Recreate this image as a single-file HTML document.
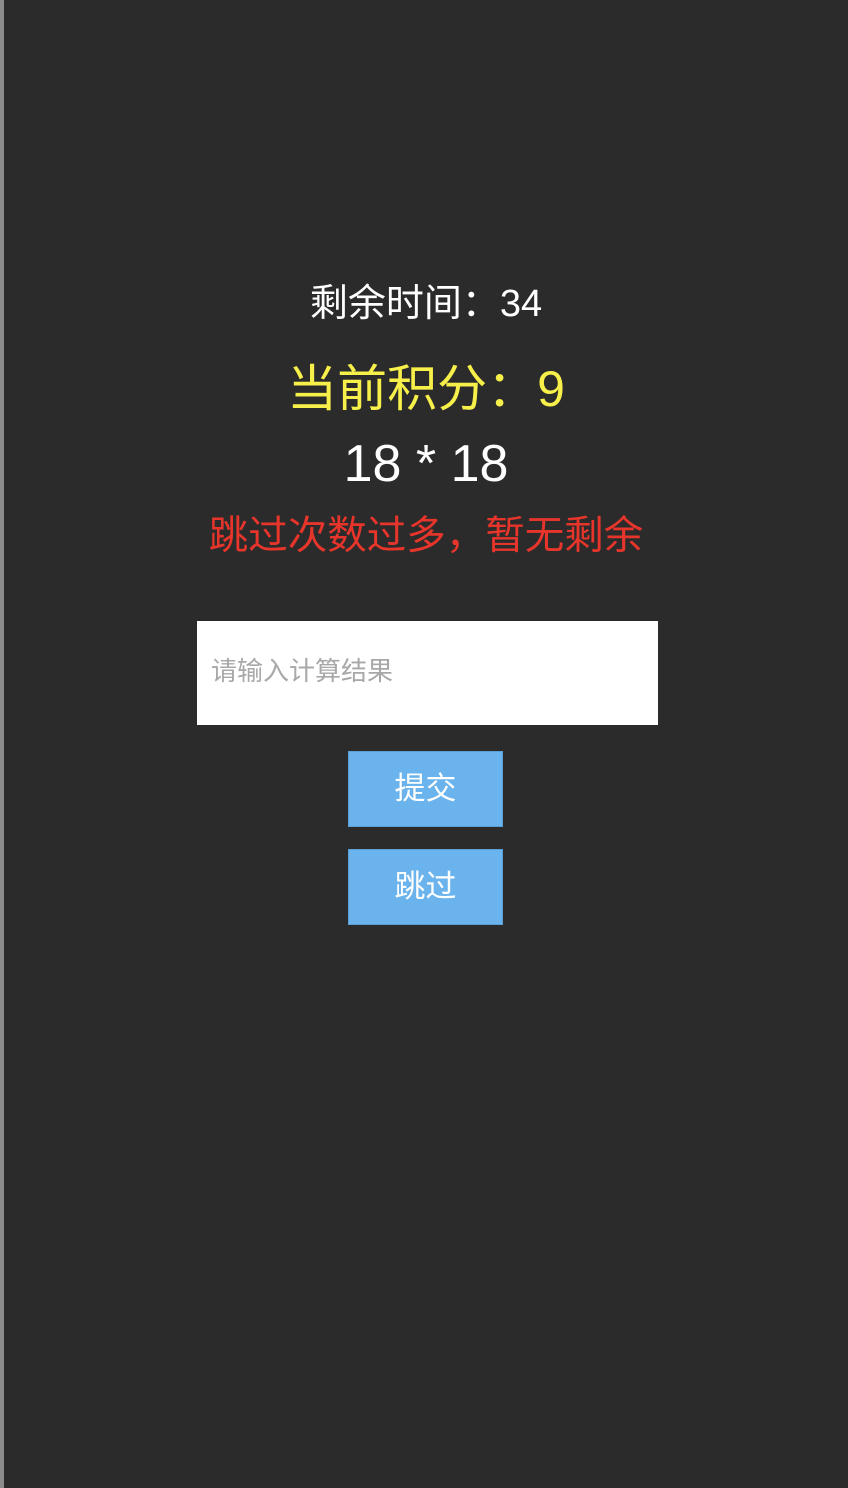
<!DOCTYPE html>
<html><head><meta charset="utf-8"><style>
html,body{margin:0;padding:0}
body{width:848px;height:1488px;background:#2b2b2b;position:relative;overflow:hidden;font-family:"Liberation Sans","Noto Sans CJK SC",sans-serif}
.bar{position:absolute;left:0;top:0;width:4px;height:1488px;background:#8c8c8c}
.t{position:absolute;left:4px;right:0;text-align:center;white-space:nowrap}
.inp{position:absolute;left:197px;top:621px;width:461px;height:104px;background:#fff}
.ph{position:absolute;left:14px;top:30px;font-size:26px;color:#a8a8a8}
.btn{position:absolute;left:348px;width:153px;height:74px;background:#6ab3ec;border:1px solid #5a9fd6;color:#fff;font-size:31px;text-align:center;line-height:74px}
</style></head><body>
<div class="bar"></div>
<div class="t" style="top:281px;font-size:38px;color:#fff;line-height:46px">剩余时间：34</div>
<div class="t" style="top:359px;font-size:50px;color:#f7f04a;line-height:60px">当前积分：9</div>
<div class="t" style="top:433px;font-size:52px;color:#fff;line-height:62px">18 * 18</div>
<div class="t" style="top:512px;font-size:39.5px;color:#e8352b;line-height:48px">跳过次数过多，暂无剩余</div>
<div class="inp"><div class="ph">请输入计算结果</div></div>
<div class="btn" style="top:751px">提交</div>
<div class="btn" style="top:849px">跳过</div>
</body></html>
